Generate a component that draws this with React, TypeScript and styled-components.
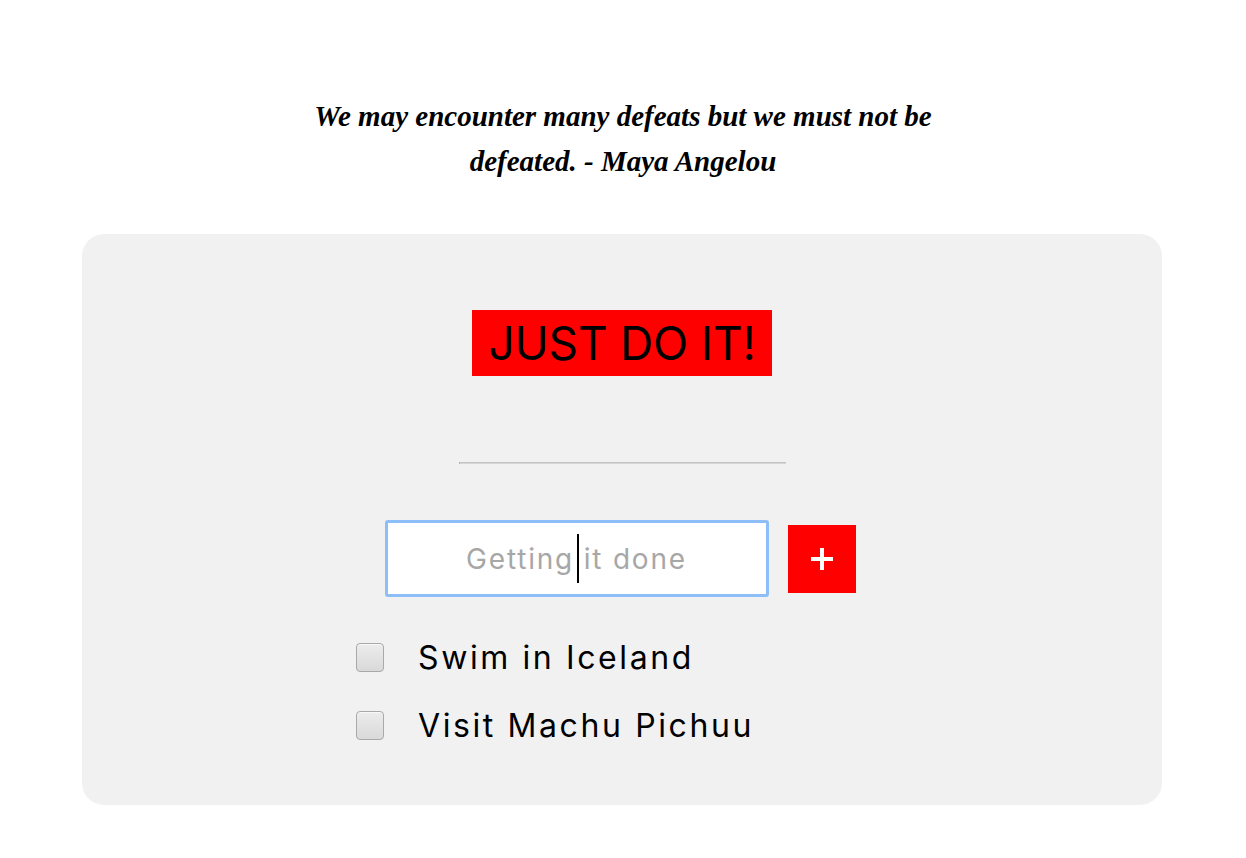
import React from "react";
import styled, { createGlobalStyle } from "styled-components";

const Global = createGlobalStyle`
  html, body { margin: 0; padding: 0; background: #ffffff; }
  body { font-family: "Inter", "Liberation Sans", sans-serif; color: #000; }
  * { box-sizing: border-box; }
`;

const Page = styled.div`
  display: flex;
  flex-direction: column;
  align-items: center;
  padding-top: 94px;
`;

const Quote = styled.p`
  margin: 0;
  width: 660px;
  text-align: center;
  font-family: "Liberation Serif", "DejaVu Serif", serif;
  font-style: italic;
  font-weight: 700;
  font-size: 29px;
  line-height: 45px;
`;

const Card = styled.section`
  margin-top: 50px;
  margin-right: 2px;
  width: 1080px;
  background: #f1f1f1;
  border-radius: 22px;
  padding: 76px 0 58px;
  display: flex;
  flex-direction: column;
  align-items: center;
`;

const Title = styled.h1`
  margin: 0;
  width: 300px;
  height: 66px;
  background: #ff0000;
  display: flex;
  align-items: center;
  justify-content: center;
  font-weight: 400;
  font-size: 46px;
  letter-spacing: -0.2px;
`;

const Rule = styled.hr`
  margin: 86px 0 0;
  width: 327px;
  height: 2px;
  border: none;
  border-top: 1px solid #c4c4c4;
  border-bottom: 1px solid #d6d6d6;
  border-left: 1px solid #999;
`;

const FormRow = styled.form`
  margin-top: 56px;
  margin-right: 4px;
  display: flex;
  align-items: center;
  gap: 19px;
`;

const InputWrap = styled.div`
  position: relative;
  display: flex;
`;

const TaskInput = styled.input`
  width: 384px;
  height: 77px;
  border: 3px solid #8dbef7;
  border-radius: 3px;
  background: #fff;
  outline: none;
  text-align: center;
  font-family: "Inter", "Liberation Sans", sans-serif;
  font-size: 28px;
  letter-spacing: 1.8px;
  caret-color: transparent;
  &::placeholder { color: #a7a7a7; }
`;

const Caret = styled.span`
  position: absolute;
  left: 192px;
  top: 14px;
  width: 2px;
  height: 49px;
  background: #000;
  pointer-events: none;
`;

const AddButton = styled.button`
  width: 68px;
  height: 68px;
  border: none;
  background: #ff0000;
  display: flex;
  align-items: center;
  justify-content: center;
  padding: 0;
  cursor: pointer;
`;

const List = styled.ul`
  list-style: none;
  margin: 38px 0 0;
  padding: 0;
  align-self: flex-start;
  margin-left: 274px;
  display: flex;
  flex-direction: column;
  gap: 24px;
`;

const Item = styled.li`
  display: flex;
  align-items: center;
  gap: 34px;
  height: 44px;
  font-size: 32px;
  letter-spacing: 2.6px;
`;

const Box = styled.input`
  appearance: none;
  margin: 0;
  width: 28px;
  height: 29px;
  border: 1px solid #a9a9a9;
  border-radius: 4px;
  background: linear-gradient(#ececec, #d9d9d9);
  box-shadow: inset 0 1px 0 #f8f8f8;
`;

const items = ["Swim in Iceland", "Visit Machu Pichuu"];

export default function App() {
  return (
    <Page>
      <Global />
      <Quote>We may encounter many defeats but we must not be defeated. - Maya Angelou</Quote>
      <Card>
        <Title>JUST DO IT!</Title>
        <Rule />
        <FormRow onSubmit={(e) => e.preventDefault()}>
          <InputWrap>
            <TaskInput placeholder="Getting it done" />
            <Caret />
          </InputWrap>
          <AddButton type="submit" aria-label="Add">
            <svg width="22" height="22" viewBox="0 0 22 22">
              <rect x="0" y="9" width="22" height="4" fill="#fff" />
              <rect x="9" y="0" width="4" height="22" fill="#fff" />
            </svg>
          </AddButton>
        </FormRow>
        <List>
          {items.map((t) => (
            <Item key={t}>
              <Box type="checkbox" />
              <span>{t}</span>
            </Item>
          ))}
        </List>
      </Card>
    </Page>
  );
}
